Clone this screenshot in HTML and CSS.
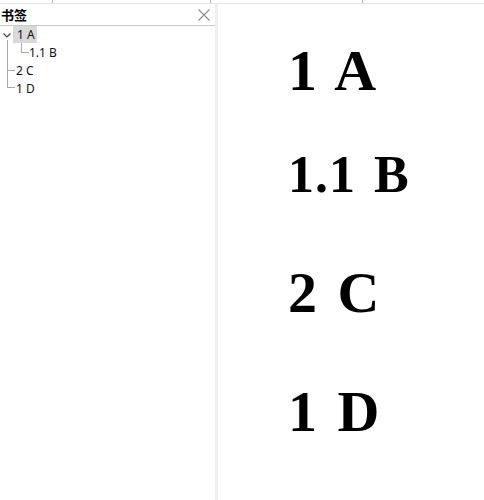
FILE: index.html
```html
<!DOCTYPE html>
<html lang="zh">
<head>
<meta charset="utf-8">
<title>书签</title>
<link rel="stylesheet" href="styles.css">
</head>
<body>
<div class="topbar">
  <span class="tick t1"></span>
  <span class="tick t2"></span>
  <span class="tick t3"></span>
</div>
<div class="main">
  <aside class="panel">
    <div class="panel-head">
      <span class="panel-title">书签</span>
      <svg class="close" width="12" height="12" viewBox="0 0 12 12"><path d="M0.5 0.5 L11.5 11.5 M11.5 0.5 L0.5 11.5" stroke="#8a8a8a" stroke-width="1.1" fill="none"/></svg>
    </div>
    <div class="tree">
      <div class="row r1">
        <svg class="chev" width="8" height="5" viewBox="0 0 8 5"><path d="M0.5 0.5 L4 4 L7.5 0.5" stroke="#444" stroke-width="1.2" fill="none"/></svg>
        <span class="label sel">1 A</span>
      </div>
      <div class="row r2 child">
        <span class="label">1.1 B</span>
      </div>
      <div class="row r3 root">
        <span class="label">2 C</span>
      </div>
      <div class="row r4 root last">
        <span class="label">1 D</span>
      </div>
    </div>
  </aside>
  <div class="splitter"></div>
  <section class="page">
    <h1 class="head h-a">1 A</h1>
    <h2 class="head sub h-b">1.1 B</h2>
    <h1 class="head h-c">2 C</h1>
    <h1 class="head h-d">1 D</h1>
  </section>
</div>
</body>
</html>
```
FILE: styles.css
```css
html, body {
  margin: 0;
  padding: 0;
  background: #ffffff;
}
body {
  width: 484px;
  height: 500px;
  overflow: hidden;
  font-family: "Noto Sans", "Noto Sans CJK SC", sans-serif;
  color: #000;
}
.topbar {
  height: 3px;
  border-bottom: 1px solid #e4e4e4;
  display: flex;
  align-items: stretch;
}
.tick {
  width: 1px;
  background: #b8b8b8;
}
.t1 { margin-left: 52px; }
.t2 { margin-left: 157px; }
.t3 { margin-left: 151px; }
.main {
  display: flex;
  height: 496px;
}
.panel {
  width: 215px;
  flex: none;
  display: flex;
  flex-direction: column;
}
.panel-head {
  height: 21px;
  border-bottom: 1px solid #c8c8c8;
  display: flex;
  align-items: center;
  justify-content: space-between;
  padding: 0 5px 0 1px;
}
.panel-title {
  font-family: "Noto Sans CJK SC", sans-serif;
  font-weight: 700;
  font-size: 13px;
  line-height: 13px;
}
.close {
  display: block;
  margin-top: 1px;
}
.tree {
  display: flex;
  flex-direction: column;
}
.row {
  height: 18px;
  display: flex;
  align-items: center;
  position: relative;
  font-size: 12px;
  color: #111;
}
.r2 { height: 17px; }
.chev {
  display: block;
  margin-left: 3px;
  margin-right: 2px;
}
.label {
  line-height: 17px;
  height: 17px;
  padding: 0 1px 0 3px;
}
.r1 .label { margin-top: -1px; }
.sel {
  background: #d9d9d9;
  padding: 0 2px 0 4px;
}
.child .label { margin-left: 26px; }
.root .label { margin-left: 13px; }
.child::before,
.root::before {
  content: "";
  position: absolute;
  border-left: 1px solid #a8a8a8;
  border-bottom: 1px solid #a8a8a8;
}
.child::before {
  left: 21px;
  top: -1px;
  width: 7px;
  height: 9px;
}
.r3::before {
  left: 7px;
  top: -21px;
  width: 7px;
  height: 30px;
}
.r4::before {
  left: 7px;
  top: -9px;
  width: 7px;
  height: 17px;
}
.splitter {
  width: 3px;
  flex: none;
  background: #efefef;
}
.page {
  flex: 1;
  padding-left: 70px;
}
.head {
  font-family: "Liberation Serif", "Times New Roman", serif;
  font-weight: 700;
  font-size: 58px;
  line-height: 58px;
  word-spacing: 4px;
  letter-spacing: 1px;
  margin: 0;
  white-space: nowrap;
}
.sub {
  font-size: 52px;
  line-height: 52px;
}
.h-a { margin-top: 38px; }
.h-b { margin-top: 49px; }
.h-c { margin-top: 63px; }
.h-d { margin-top: 61px; }
```
